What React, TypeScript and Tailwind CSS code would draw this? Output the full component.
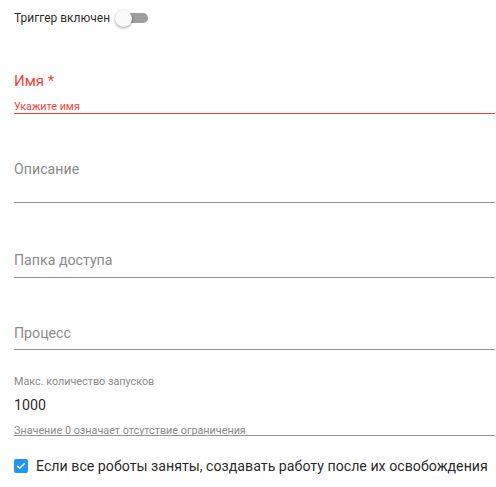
import React from "react";

export default function App() {
  const font = { fontFamily: "Roboto, 'Liberation Sans', sans-serif" };
  return (
    <div className="w-[496px] h-[487px] bg-white pl-[14px] pr-[1px]" style={font}>
      {/* toggle row */}
      <div className="flex items-center h-[20px] mt-[8px]">
        <span className="text-[12px] text-[rgba(0,0,0,0.87)] leading-none">Триггер включен</span>
        <div className="relative ml-[5px] w-[34px] h-[20px]">
          <div className="absolute left-[3px] top-[5px] w-[30px] h-[10px] rounded-full bg-[#9e9e9e]" />
          <div className="absolute left-0 top-[2px] w-[17px] h-[17px] rounded-full bg-[#fafafa] shadow-[0_1px_3px_rgba(0,0,0,0.4)]" />
        </div>
      </div>

      {/* Имя */}
      <div className="mt-[44px] h-[42px] flex flex-col border-b border-[#f44336] relative">
        <span className="text-[15px] leading-none text-[#f44336] mt-[2px]">Имя *</span>
        <span className="text-[10.8px] leading-none text-[#f44336] mt-[13px]">Укажите имя</span>
      </div>

      {/* Описание */}
      <div className="mt-[48px] h-[41px] border-b border-[#949494]">
        <span className="block text-[14.2px] leading-none text-[#8a8a8a] mt-[0px]">Описание</span>
      </div>

      {/* Папка доступа */}
      <div className="mt-[50px] h-[25px] border-b border-[#949494]">
        <span className="block text-[14.2px] leading-none text-[#8a8a8a] mt-[0px]">Папка доступа</span>
      </div>

      {/* Процесс */}
      <div className="mt-[48px] h-[24px] border-b border-[#949494]">
        <span className="block text-[14.2px] leading-none text-[#8a8a8a] mt-[1px]">Процесс</span>
      </div>

      {/* Макс */}
      <div className="mt-[26px] h-[60px] border-b border-[#949494] flex flex-col">
        <span className="text-[10.8px] leading-none text-[#8a8a8a] mt-[1px]">Макс. количество запусков</span>
        <span className="text-[14.2px] leading-none text-[rgba(0,0,0,0.87)] mt-[10px]">1000</span>
        <span className="text-[10.8px] leading-none text-[#8a8a8a] mt-[14px]">Значение 0 означает отсутствие ограничения</span>
      </div>

      {/* checkbox */}
      <div className="mt-[23px] flex items-center">
        <div className="w-[14px] h-[14px] rounded-[2px] bg-[#2196f3] flex items-center justify-center">
          <svg width="10" height="10" viewBox="0 0 24 24" fill="none" stroke="white" strokeWidth="3.5" strokeLinecap="round" strokeLinejoin="round">
            <path d="M4 12.5l5 5L20 6.5" />
          </svg>
        </div>
        <span className="ml-[8px] text-[14.2px] leading-none text-[rgba(0,0,0,0.87)]">Если все роботы заняты, создавать работу после их освобождения</span>
      </div>
    </div>
  );
}
